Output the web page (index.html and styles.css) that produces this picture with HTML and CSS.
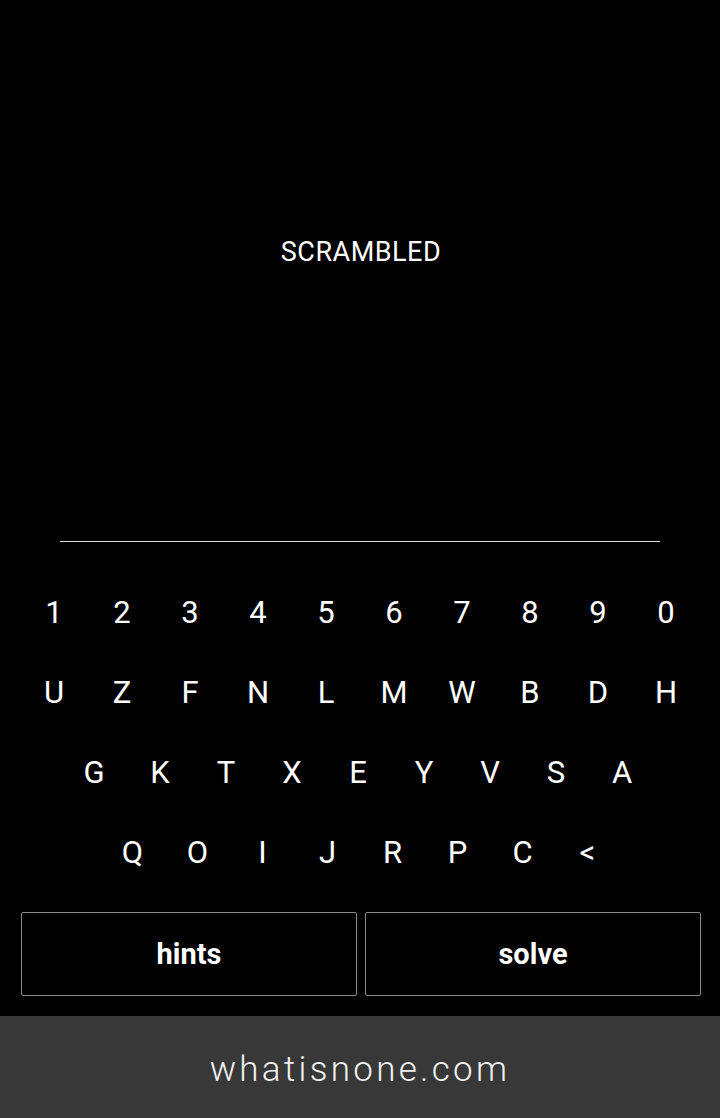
FILE: index.html
```html
<!DOCTYPE html>
<html>
<head>
<meta charset="utf-8">
<link rel="stylesheet" href="styles.css">
</head>
<body>
<div class="app">
  <main class="game">
    <div class="display">
      <div class="word">SCRAMBLED</div>
    </div>
    <div class="rule"></div>
    <div class="keyboard">
      <div class="row row-10">
        <span class="key">1</span><span class="key">2</span><span class="key">3</span><span class="key">4</span><span class="key">5</span><span class="key">6</span><span class="key">7</span><span class="key">8</span><span class="key">9</span><span class="key">0</span>
      </div>
      <div class="row row-10">
        <span class="key">U</span><span class="key">Z</span><span class="key">F</span><span class="key">N</span><span class="key">L</span><span class="key">M</span><span class="key">W</span><span class="key">B</span><span class="key">D</span><span class="key">H</span>
      </div>
      <div class="row row-9">
        <span class="key">G</span><span class="key">K</span><span class="key">T</span><span class="key">X</span><span class="key">E</span><span class="key">Y</span><span class="key">V</span><span class="key">S</span><span class="key">A</span>
      </div>
      <div class="row row-8">
        <span class="key">Q</span><span class="key">O</span><span class="key">I</span><span class="key">J</span><span class="key">R</span><span class="key">P</span><span class="key">C</span><span class="key">&lt;</span>
      </div>
    </div>
    <div class="actions">
      <button class="btn">hints</button>
      <button class="btn">solve</button>
    </div>
  </main>
  <footer class="footer">whatisnone.com</footer>
</div>
</body>
</html>
```
FILE: styles.css
```css
html, body {
  margin: 0;
  padding: 0;
  background: #000;
}
body {
  font-family: Roboto, "Noto Sans", sans-serif;
  color: #fff;
}
.app {
  width: 720px;
  height: 1118px;
  display: flex;
  flex-direction: column;
}
.game {
  height: 1016px;
  display: flex;
  flex-direction: column;
}
.display {
  height: 541px;
  padding-top: 236px;
  box-sizing: border-box;
}
.word {
  text-align: center;
  font-size: 27px;
  line-height: 32px;
  letter-spacing: 0.5px;
  padding-left: 2px;
  color: #fff;
}
.rule {
  width: 600px;
  height: 1px;
  margin: 0 auto;
  background: #e0e0e0;
}
.keyboard {
  padding-top: 31px;
  display: flex;
  flex-direction: column;
}
.row {
  display: flex;
  justify-content: center;
  height: 80px;
  align-items: center;
}
.key {
  font-size: 31px;
  line-height: 80px;
  text-align: center;
  color: #fff;
}
.row-10 .key { width: 68px; }
.row-9 { padding-right: 4px; }
.row-9 .key { width: 66px; }
.row-8 .key { width: 65px; }
.actions {
  display: flex;
  gap: 8px;
  padding: 19px 19px 0 21px;
}
.btn {
  flex: 1;
  height: 84px;
  background: #000;
  border: 1px solid #8a8a8a;
  border-radius: 2px;
  color: #fff;
  font-family: Roboto, "Noto Sans", sans-serif;
  font-weight: 700;
  font-size: 29px;
  padding: 0;
}
.footer {
  height: 102px;
  box-sizing: border-box;
  padding-top: 5px;
  background: #383838;
  display: flex;
  align-items: center;
  justify-content: center;
  font-size: 35px;
  font-weight: 300;
  letter-spacing: 3.3px;
  color: #f2f2f2;
}
```
